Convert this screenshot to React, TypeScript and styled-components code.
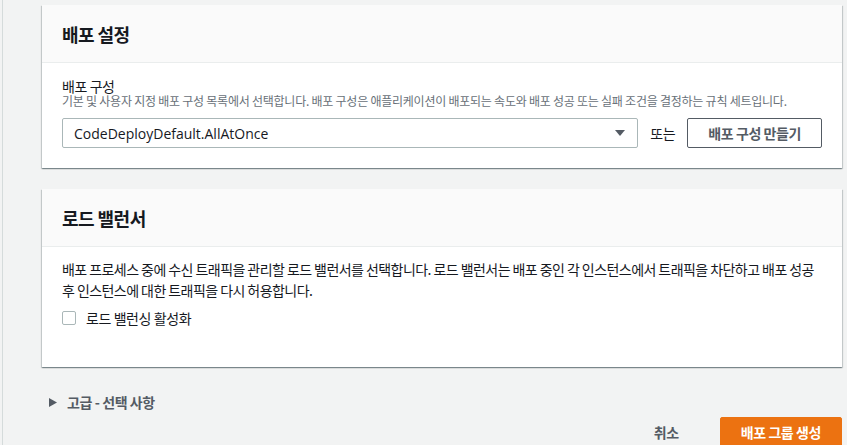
import React from "react";
import styled, { createGlobalStyle } from "styled-components";

const KR = `"Noto Sans CJK KR", "Noto Sans", sans-serif`;
const LS = "-0.03em";

const GlobalStyle = createGlobalStyle`
  html, body { margin: 0; padding: 0; }
  body {
    background: #f2f3f3;
    font-family: ${KR};
    color: #16191f;
    -webkit-font-smoothing: antialiased;
  }
  * { box-sizing: border-box; }
`;

const Page = styled.div`
  display: flex;
  min-height: 445px;
  padding-left: 2px;
  overflow: hidden;
`;

const Main = styled.main`
  flex: 1;
  border-left: 1px solid #d5dbdb;
  padding: 5px 5px 0 39px;
  display: flex;
  flex-direction: column;
`;

const Card = styled.section`
  background: #ffffff;
  box-shadow: 0 1px 1px 0 rgba(0, 28, 36, 0.3), 1px 1px 1px 0 rgba(0, 28, 36, 0.15),
    -1px 1px 1px 0 rgba(0, 28, 36, 0.15);
  margin-bottom: 21px;
`;

const CardHeader = styled.header`
  height: 58px;
  background: #fafafa;
  border-bottom: 1px solid #eaeded;
  padding: 0 20px;
  display: flex;
  align-items: center;
`;

const Title = styled.h2`
  margin: 0;
  font-size: 18px;
  font-weight: 700;
  letter-spacing: ${LS};
  line-height: 22px;
  color: #16191f;
`;

const CardBody = styled.div<{ $pt: number; $pb: number }>`
  padding: ${(p) => p.$pt}px 20px ${(p) => p.$pb}px;
`;

const Label = styled.div`
  font-size: 14px;
  line-height: 15px;
  letter-spacing: ${LS};
  color: #16191f;
`;

const Description = styled.div`
  font-size: 12px;
  line-height: 13px;
  letter-spacing: -0.02em;
  color: #687078;
  margin-bottom: 11px;
`;

const Row = styled.div`
  display: flex;
  align-items: center;
  gap: 12px;
`;

const Select = styled.div`
  flex: 1;
  height: 30px;
  border: 1px solid #aab7b8;
  border-radius: 2px;
  padding: 0 12px 0 11px;
  display: flex;
  align-items: center;
  justify-content: space-between;
  font-family: "Open Sans", "Noto Sans", sans-serif;
  font-size: 14px;
  color: #16191f;
`;

const Or = styled.span`
  font-size: 14px;
  letter-spacing: ${LS};
  color: #16191f;
`;

const Button = styled.button<{ $primary?: boolean }>`
  height: 30px;
  padding: 0 20px;
  border-radius: 2px;
  border: 1px solid ${(p) => (p.$primary ? "#ec7211" : "#545b64")};
  background: ${(p) => (p.$primary ? "#ec7211" : "#ffffff")};
  color: ${(p) => (p.$primary ? "#ffffff" : "#545b64")};
  font-family: ${KR};
  font-size: 14px;
  font-weight: 700;
  letter-spacing: ${LS};
  cursor: pointer;
`;

const LinkButton = styled.button`
  height: 30px;
  padding: 0 20px;
  border: none;
  background: transparent;
  color: #545b64;
  font-family: ${KR};
  font-size: 14px;
  font-weight: 700;
  letter-spacing: ${LS};
`;

const Paragraph = styled.p`
  margin: 0;
  font-size: 14px;
  line-height: 21px;
  letter-spacing: -0.04em;
  word-break: keep-all;
  color: #16191f;
`;

const CheckRow = styled.label`
  display: flex;
  align-items: center;
  gap: 10px;
  margin-top: 7px;
  height: 20px;
  font-size: 14px;
  letter-spacing: ${LS};
  color: #16191f;
`;

const CheckBox = styled.span`
  width: 14px;
  height: 14px;
  border: 1px solid #aab7b8;
  border-radius: 2px;
  background: #fff;
`;

const Expander = styled.div`
  display: flex;
  align-items: center;
  gap: 10px;
  padding-left: 7px;
  margin-top: 3px;
  height: 22px;
  font-size: 14px;
  font-weight: 700;
  letter-spacing: ${LS};
  color: #545b64;
`;

const Footer = styled.div`
  display: flex;
  justify-content: flex-end;
  align-items: center;
  gap: 21px;
  margin-top: 4px;
`;

const Caret = ({ dir }: { dir: "down" | "right" }) =>
  dir === "down" ? (
    <svg width="10" height="6" viewBox="0 0 10 6">
      <path d="M0 0 H10 L5 6 Z" fill="#545b64" />
    </svg>
  ) : (
    <svg width="8" height="9" viewBox="0 0 8 9">
      <path d="M0 0 L8 4.5 L0 9 Z" fill="#545b64" />
    </svg>
  );

export default function App() {
  return (
    <>
      <GlobalStyle />
      <Page>
        <Main>
          <Card>
            <CardHeader>
              <Title>배포 설정</Title>
            </CardHeader>
            <CardBody $pt={16} $pb={20}>
              <Label>배포 구성</Label>
              <Description>
                기본 및 사용자 지정 배포 구성 목록에서 선택합니다. 배포 구성은 애플리케이션이 배포되는 속도와 배포 성공 또는 실패 조건을 결정하는 규칙 세트입니다.
              </Description>
              <Row>
                <Select>
                  <span>CodeDeployDefault.AllAtOnce</span>
                  <Caret dir="down" />
                </Select>
                <Or>또는</Or>
                <Button>배포 구성 만들기</Button>
              </Row>
            </CardBody>
          </Card>
          <Card>
            <CardHeader>
              <Title>로드 밸런서</Title>
            </CardHeader>
            <CardBody $pt={12} $pb={39}>
              <Paragraph>
                배포 프로세스 중에 수신 트래픽을 관리할 로드 밸런서를 선택합니다. 로드 밸런서는 배포 중인 각 인스턴스에서 트래픽을 차단하고 배포 성공 후 인스턴스에 대한 트래픽을 다시 허용합니다.
              </Paragraph>
              <CheckRow>
                <CheckBox />
                로드 밸런싱 활성화
              </CheckRow>
            </CardBody>
          </Card>
          <Expander>
            <Caret dir="right" />
            고급 - 선택 사항
          </Expander>
          <Footer>
            <LinkButton>취소</LinkButton>
            <Button $primary>배포 그룹 생성</Button>
          </Footer>
        </Main>
      </Page>
    </>
  );
}
